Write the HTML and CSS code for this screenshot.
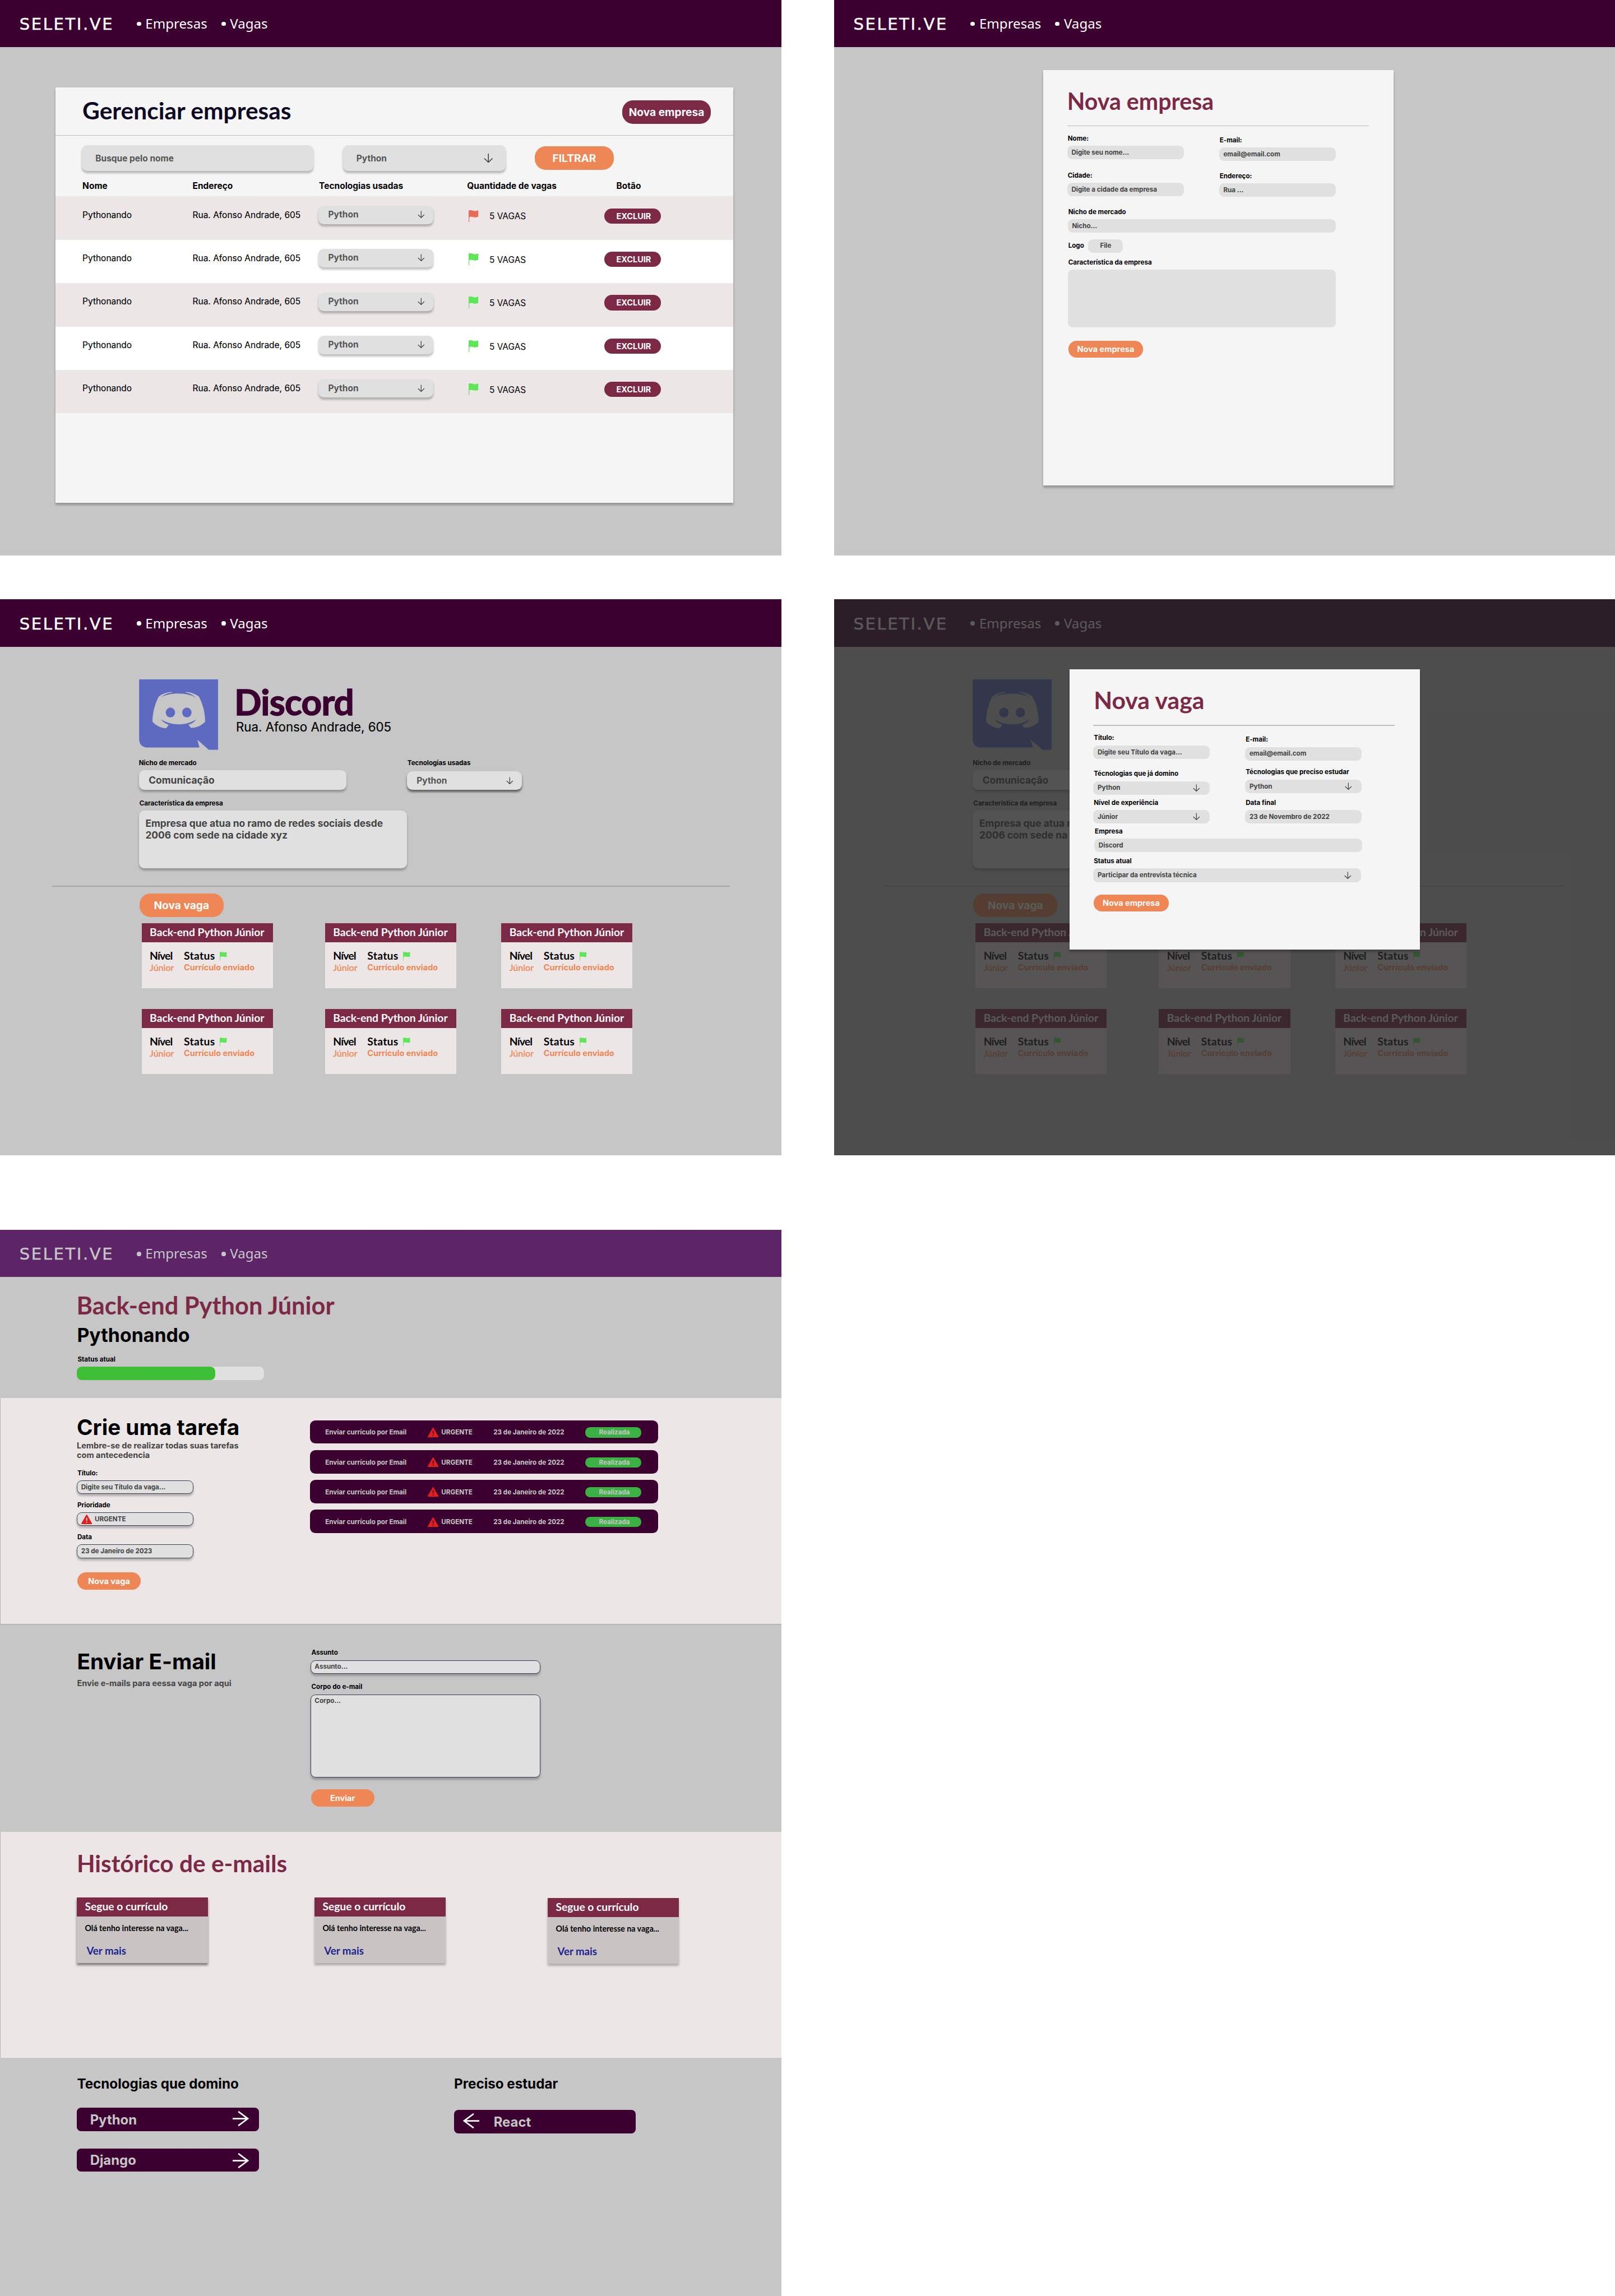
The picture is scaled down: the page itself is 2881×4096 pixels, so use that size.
FILE: index.html
```html
<!DOCTYPE html>
<html lang="pt-BR">
<head>
<meta charset="utf-8">
<title>SELETI.VE</title>
<link rel="stylesheet" href="styles.css">
</head>
<body>
<svg class="sprite" aria-hidden="true">
  <symbol id="i-down" viewBox="0 0 17 17"><path d="M8.5 0V16M1 8.8L8.5 16.2L16 8.8" fill="none" stroke="currentColor" stroke-width="1.7"/></symbol>
  <symbol id="i-right" viewBox="0 0 30 28"><path d="M0 14H28M10.500 1L28 14L10.500 27" fill="none" stroke="currentColor" stroke-width="2.800"/></symbol>
  <symbol id="i-left" viewBox="0 0 30 28"><path d="M30 14H2M19.500 1L2 14L19.500 27" fill="none" stroke="currentColor" stroke-width="2.800"/></symbol>
  <symbol id="i-flag" viewBox="0 0 18 22"><path d="M0 .6C3-.2 6 0 9 1C12 2 15 1.600 18 0V12C15 13.300 12 13.600 9 12.600C6 11.600 3 12 1.200 12.800V22H0Z" fill="currentColor"/></symbol>
  <symbol id="i-alert" viewBox="0 0 20 18"><path d="M10 1.300L18.700 16.700H1.300Z" fill="#e01f1f" stroke="#e01f1f" stroke-width="2.400" stroke-linejoin="round"/><path d="M10 6V11.500M10 13.200V15" stroke="currentColor" stroke-width="1.700"/></symbol>
  <symbol id="i-discord" viewBox="0 0 437 390"><path d="M0 0H437V390H386L322 334L334 377H50Q0 377 0 327Z" fill="#5d6abf"/><path d="M182 70C160 68 125 80 108 96C90 130 74 180 74 234C95 258 125 270 150 270L164 251C145 245 130 235 121 222C180 258 260 258 315 222C305 238 290 246 272 251L287 268C320 268 345 255 365 234C365 180 350 130 331 96C315 82 280 68 257 70V73C275 75 300 85 317 105C280 70 160 70 119 102C135 85 160 75 182 73Z" fill="#c6c6c6"/><ellipse cx="173" cy="183" rx="26" ry="27" fill="#5d6abf"/><ellipse cx="264" cy="183" rx="26" ry="27" fill="#5d6abf"/></symbol>
</svg>

<main class="board">

  <section class="screen">
    <header class="topbar"><span class="brand">SELETI.VE</span><nav class="nav"><a class="nav-link">Empresas</a><a class="nav-link">Vagas</a></nav></header>
    <div class="panel manage">
      <div class="manage-head"><h1 class="manage-title">Gerenciar empresas</h1><button class="btn btn-wine manage-new">Nova empresa</button></div>
      <div class="filters">
        <div class="box search">Busque pelo nome</div>
        <div class="box tech-filter">Python<svg class="arrow-lg"><use href="#i-down"/></svg></div>
        <button class="btn btn-filter">FILTRAR</button>
      </div>
      <div class="columns"><span>Nome</span><span>Endereço</span><span>Tecnologias usadas</span><span>Quantidade de vagas</span><span>Botão</span></div>
      <div class="row"><span class="cell">Pythonando</span><span class="cell">Rua. Afonso Andrade, 605</span><div class="box row-select">Python<svg class="arrow-sm"><use href="#i-down"/></svg></div><div class="jobs"><svg class="flag late"><use href="#i-flag"/></svg>5 VAGAS</div><button class="btn btn-delete">EXCLUIR</button></div>
      <div class="row"><span class="cell">Pythonando</span><span class="cell">Rua. Afonso Andrade, 605</span><div class="box row-select">Python<svg class="arrow-sm"><use href="#i-down"/></svg></div><div class="jobs"><svg class="flag"><use href="#i-flag"/></svg>5 VAGAS</div><button class="btn btn-delete">EXCLUIR</button></div>
      <div class="row"><span class="cell">Pythonando</span><span class="cell">Rua. Afonso Andrade, 605</span><div class="box row-select">Python<svg class="arrow-sm"><use href="#i-down"/></svg></div><div class="jobs"><svg class="flag"><use href="#i-flag"/></svg>5 VAGAS</div><button class="btn btn-delete">EXCLUIR</button></div>
      <div class="row"><span class="cell">Pythonando</span><span class="cell">Rua. Afonso Andrade, 605</span><div class="box row-select">Python<svg class="arrow-sm"><use href="#i-down"/></svg></div><div class="jobs"><svg class="flag"><use href="#i-flag"/></svg>5 VAGAS</div><button class="btn btn-delete">EXCLUIR</button></div>
      <div class="row"><span class="cell">Pythonando</span><span class="cell">Rua. Afonso Andrade, 605</span><div class="box row-select">Python<svg class="arrow-sm"><use href="#i-down"/></svg></div><div class="jobs"><svg class="flag"><use href="#i-flag"/></svg>5 VAGAS</div><button class="btn btn-delete">EXCLUIR</button></div>
    </div>
  </section>

  <section class="screen">
    <header class="topbar"><span class="brand">SELETI.VE</span><nav class="nav"><a class="nav-link">Empresas</a><a class="nav-link">Vagas</a></nav></header>
    <div class="panel form company-form">
      <h1 class="form-title title-company">Nova empresa</h1>
      <hr class="form-rule">
      <div class="form-cols">
        <div class="form-col gap-22">
          <div class="field"><label>Nome:</label><div class="input">Digite seu nome...</div></div>
          <div class="field"><label>Cidade:</label><div class="input">Digite a cidade da empresa</div></div>
        </div>
        <div class="form-col right gap-20">
          <div class="field"><label>E-mail:</label><div class="input">email@email.com</div></div>
          <div class="field"><label>Endereço:</label><div class="input">Rua ...</div></div>
        </div>
      </div>
      <div class="field wide niche"><label>Nicho de mercado</label><div class="input">Nicho...</div></div>
      <div class="logo-row"><label>Logo</label><div class="input file">File</div></div>
      <div class="field wide traits"><label>Característica da empresa</label><div class="input area"></div></div>
      <button class="btn btn-form company-submit">Nova empresa</button>
    </div>
  </section>

  <section class="screen company">
    <header class="topbar"><span class="brand">SELETI.VE</span><nav class="nav"><a class="nav-link">Empresas</a><a class="nav-link">Vagas</a></nav></header>
    <div class="company-head"><svg class="company-logo"><use href="#i-discord"/></svg><div class="company-id"><h1 class="company-name">Discord</h1><p class="company-address">Rua. Afonso Andrade, 605</p></div></div>
    <div class="company-fields">
      <div class="field niche-col"><label>Nicho de mercado</label><div class="box niche-box">Comunicação</div></div>
      <div class="field"><label>Tecnologias usadas</label><div class="box tech-box">Python<svg class="arrow-sm"><use href="#i-down"/></svg></div></div>
    </div>
    <div class="field about"><label>Característica da empresa</label><div class="box about-box">Empresa que atua no ramo de redes sociais desde<br>2006 com sede na cidade xyz</div></div>
    <hr class="company-rule">
    <button class="btn btn-job">Nova vaga</button>
    <div class="cards">
      <article class="card"><h2 class="card-title">Back-end Python Júnior</h2><div class="card-body"><div class="card-level"><b>Nível</b><i>Júnior</i></div><div class="card-status"><b>Status<svg class="flag-sm"><use href="#i-flag"/></svg></b><em>Currículo enviado</em></div></div></article>
      <article class="card"><h2 class="card-title">Back-end Python Júnior</h2><div class="card-body"><div class="card-level"><b>Nível</b><i>Júnior</i></div><div class="card-status"><b>Status<svg class="flag-sm"><use href="#i-flag"/></svg></b><em>Currículo enviado</em></div></div></article>
      <article class="card"><h2 class="card-title">Back-end Python Júnior</h2><div class="card-body"><div class="card-level"><b>Nível</b><i>Júnior</i></div><div class="card-status"><b>Status<svg class="flag-sm"><use href="#i-flag"/></svg></b><em>Currículo enviado</em></div></div></article>
      <article class="card"><h2 class="card-title">Back-end Python Júnior</h2><div class="card-body"><div class="card-level"><b>Nível</b><i>Júnior</i></div><div class="card-status"><b>Status<svg class="flag-sm"><use href="#i-flag"/></svg></b><em>Currículo enviado</em></div></div></article>
      <article class="card"><h2 class="card-title">Back-end Python Júnior</h2><div class="card-body"><div class="card-level"><b>Nível</b><i>Júnior</i></div><div class="card-status"><b>Status<svg class="flag-sm"><use href="#i-flag"/></svg></b><em>Currículo enviado</em></div></div></article>
      <article class="card"><h2 class="card-title">Back-end Python Júnior</h2><div class="card-body"><div class="card-level"><b>Nível</b><i>Júnior</i></div><div class="card-status"><b>Status<svg class="flag-sm"><use href="#i-flag"/></svg></b><em>Currículo enviado</em></div></div></article>
    </div>
  </section>

  <section class="screen company">
    <header class="topbar"><span class="brand">SELETI.VE</span><nav class="nav"><a class="nav-link">Empresas</a><a class="nav-link">Vagas</a></nav></header>
    <div class="company-head"><svg class="company-logo"><use href="#i-discord"/></svg></div>
    <div class="company-fields">
      <div class="field niche-col"><label>Nicho de mercado</label><div class="box niche-box">Comunicação</div></div>
    </div>
    <div class="field about"><label>Característica da empresa</label><div class="box about-box"><p class="about-clip">Empresa que atua no<br>2006 com sede na</p></div></div>
    <hr class="company-rule">
    <button class="btn btn-job">Nova vaga</button>
    <div class="cards">
      <article class="card"><h2 class="card-title">Back-end Python Júnior</h2><div class="card-body"><div class="card-level"><b>Nível</b><i>Júnior</i></div><div class="card-status"><b>Status<svg class="flag-sm"><use href="#i-flag"/></svg></b><em>Currículo enviado</em></div></div></article>
      <article class="card"><h2 class="card-title"></h2><div class="card-body"><div class="card-level"><b>Nível</b><i>Júnior</i></div><div class="card-status"><b>Status<svg class="flag-sm"><use href="#i-flag"/></svg></b><em>Currículo enviado</em></div></div></article>
      <article class="card"><h2 class="card-title">Back-end Python Júnior</h2><div class="card-body"><div class="card-level"><b>Nível</b><i>Júnior</i></div><div class="card-status"><b>Status<svg class="flag-sm"><use href="#i-flag"/></svg></b><em>Currículo enviado</em></div></div></article>
      <article class="card"><h2 class="card-title">Back-end Python Júnior</h2><div class="card-body"><div class="card-level"><b>Nível</b><i>Júnior</i></div><div class="card-status"><b>Status<svg class="flag-sm"><use href="#i-flag"/></svg></b><em>Currículo enviado</em></div></div></article>
      <article class="card"><h2 class="card-title">Back-end Python Júnior</h2><div class="card-body"><div class="card-level"><b>Nível</b><i>Júnior</i></div><div class="card-status"><b>Status<svg class="flag-sm"><use href="#i-flag"/></svg></b><em>Currículo enviado</em></div></div></article>
      <article class="card"><h2 class="card-title">Back-end Python Júnior</h2><div class="card-body"><div class="card-level"><b>Nível</b><i>Júnior</i></div><div class="card-status"><b>Status<svg class="flag-sm"><use href="#i-flag"/></svg></b><em>Currículo enviado</em></div></div></article>
    </div>
    <div class="overlay">
      <div class="panel form modal">
        <h1 class="form-title title-job">Nova vaga</h1>
        <hr class="form-rule">
        <div class="form-cols">
          <div class="form-col job-left">
            <div class="field"><label>Título:</label><div class="input">Digite seu Título da vaga...</div></div>
            <div class="field after-20"><label>Técnologias que já domino</label><div class="input">Python<svg class="arrow-in"><use href="#i-down"/></svg></div></div>
            <div class="field after-7"><label>Nível de experiência</label><div class="input">Júnior<svg class="arrow-in"><use href="#i-down"/></svg></div></div>
          </div>
          <div class="form-col right">
            <div class="field"><label>E-mail:</label><div class="input">email@email.com</div></div>
            <div class="field after-14"><label>Técnologias que preciso estudar</label><div class="input">Python<svg class="arrow-in"><use href="#i-down"/></svg></div></div>
            <div class="field after-10"><label>Data final</label><div class="input">23 de Novembro de 2022</div></div>
          </div>
        </div>
        <div class="field wide job-company"><label>Empresa</label><div class="input">Discord</div></div>
        <div class="field wide job-status"><label>Status atual</label><div class="input">Participar da entrevista técnica<svg class="arrow-in"><use href="#i-down"/></svg></div></div>
        <button class="btn btn-form job-submit">Nova empresa</button>
      </div>
    </div>
  </section>

  <section class="screen job">
    <header class="topbar violet"><span class="brand">SELETI.VE</span><nav class="nav"><a class="nav-link">Empresas</a><a class="nav-link">Vagas</a></nav></header>
    <div class="job-intro">
      <h1 class="job-title">Back-end Python Júnior</h1>
      <p class="job-company-name">Pythonando</p>
      <div class="field"><label>Status atual</label><div class="progress"><div class="progress-fill"></div></div></div>
    </div>
    <div class="band tasks">
      <div class="side">
        <h2 class="side-title">Crie uma tarefa</h2>
        <p class="side-text">Lembre-se de realizar todas suas tarefas<br>com antecedencia</p>
        <div class="task-form">
          <div class="field"><label>Título:</label><div class="input outlined">Digite seu Título da vaga...</div></div>
          <div class="field"><label>Prioridade</label><div class="input outlined"><svg class="alert in-form"><use href="#i-alert"/></svg>URGENTE</div></div>
          <div class="field"><label>Data</label><div class="input outlined">23 de Janeiro de 2023</div></div>
        </div>
        <button class="btn btn-form btn-task">Nova vaga</button>
      </div>
      <div class="task-list">
        <div class="task"><span>Enviar currículo por Email</span><span class="task-prio"><svg class="alert"><use href="#i-alert"/></svg>URGENTE</span><span>23 de Janeiro de 2022</span><span class="pill">Realizada</span></div>
        <div class="task"><span>Enviar currículo por Email</span><span class="task-prio"><svg class="alert"><use href="#i-alert"/></svg>URGENTE</span><span>23 de Janeiro de 2022</span><span class="pill">Realizada</span></div>
        <div class="task"><span>Enviar currículo por Email</span><span class="task-prio"><svg class="alert"><use href="#i-alert"/></svg>URGENTE</span><span>23 de Janeiro de 2022</span><span class="pill">Realizada</span></div>
        <div class="task"><span>Enviar currículo por Email</span><span class="task-prio"><svg class="alert"><use href="#i-alert"/></svg>URGENTE</span><span>23 de Janeiro de 2022</span><span class="pill">Realizada</span></div>
      </div>
    </div>
    <div class="mail">
      <div class="side">
        <h2 class="side-title">Enviar E-mail</h2>
        <p class="side-text mail-text">Envie e-mails para eessa vaga por aqui</p>
      </div>
      <div class="mail-form">
        <div class="field"><label>Assunto</label><div class="input outlined">Assunto...</div></div>
        <div class="field mail-body"><label>Corpo do e-mail</label><div class="input outlined">Corpo...</div></div>
        <button class="btn btn-form btn-send">Enviar</button>
      </div>
    </div>
    <div class="band history">
      <h2 class="history-title">Histórico de e-mails</h2>
      <div class="mails">
        <article class="mail-card strong"><h3 class="card-title">Segue o currículo</h3><p class="mail-snippet">Olá tenho interesse na vaga...</p><a class="mail-more">Ver mais</a></article>
        <article class="mail-card"><h3 class="card-title">Segue o currículo</h3><p class="mail-snippet">Olá tenho interesse na vaga...</p><a class="mail-more">Ver mais</a></article>
        <article class="mail-card lower"><h3 class="card-title">Segue o currículo</h3><p class="mail-snippet">Olá tenho interesse na vaga...</p><a class="mail-more">Ver mais</a></article>
      </div>
    </div>
    <div class="skills">
      <div class="skill-col known"><h3 class="skill-title">Tecnologias que domino</h3><div class="skill">Python<svg class="arrow-xl"><use href="#i-right"/></svg></div><div class="skill second">Django<svg class="arrow-xl"><use href="#i-right"/></svg></div></div>
      <div class="skill-col study"><h3 class="skill-title">Preciso estudar</h3><div class="skill"><svg class="arrow-xl"><use href="#i-left"/></svg>React</div></div>
    </div>
  </section>

</main>
</body>
</html>
```
FILE: styles.css
```css
* { box-sizing: border-box; margin: 0; padding: 0; }

html, body { background: #fff; overflow: hidden; }

body { font-family: Inter, "Liberation Sans", sans-serif; color: #000; }

.sprite { display: none; }

svg { display: block; flex: none; }

/* Board: two columns of 1440px screens */
.board {
  zoom: 0.96785;
  width: 2977px;
  height: 4232px;
  display: grid;
  grid-template-columns: 1440px 1440px;
  grid-template-rows: 1024px 1024px 1965px;
  column-gap: 97px;
}
.screen { position: relative; background: #c6c6c6; height: 1024px; overflow: hidden; }
.screen:nth-child(3), .screen:nth-child(4) { margin-top: 81px; }
.screen.job { height: 1965px; margin-top: 219px; }

/* Top bar */
.topbar { height: 87px; background: #3b0030; color: #fff; display: flex; align-items: flex-start; padding-left: 36px; }
.violet { background: #5d2468; color: #c6c6c6; }
.brand { width: 216px; padding-top: 25px; font: 400 30px/40px "DejaVu Sans", sans-serif; letter-spacing: 2.7px; -webkit-text-stroke: .5px currentColor; }
.nav { display: flex; padding-top: 26px; }
.nav-link { display: flex; align-items: center; font: 400 24.9px/36px "Noto Sans", sans-serif; width: 156px; }
.nav-link::before { content: ""; width: 8px; height: 8px; border-radius: 50%; background: currentColor; margin: 0 8px 0 0; }

/* Shared pieces */
.panel { background: #f5f5f5; box-shadow: 0 4px 4px rgba(0, 0, 0, .25); }
.btn { border: 0; display: flex; align-items: center; justify-content: center; font-family: inherit; font-weight: 700; color: #fff; background: #ee8655; }
.btn-wine, .btn-delete { background: #7c2946; }
.box { background: #e0e0e0; border-radius: 10px; box-shadow: 0 4px 4px rgba(0, 0, 0, .25); display: flex; align-items: center; justify-content: space-between; font-weight: 700; font-size: 16px; color: #555; }
.field label, .logo-row label { display: block; font: 700 12px/15px Inter, sans-serif; padding-left: 1px; }
.input { width: 215px; height: 25px; margin-top: 6px; border-radius: 9px; background: #e0e0e0; display: flex; align-items: center; font: 700 12px/15px Inter, sans-serif; color: #444; padding: 0 18px 0 8px; }
.arrow-lg { width: 17px; height: 17px; color: #444; }
.arrow-sm, .arrow-in { width: 13px; height: 14px; color: #444; }
.arrow-in { margin-left: auto; }

/* Manage companies */
.manage { width: 1249px; height: 766px; margin: 74px 0 0 102px; }
.manage-head { height: 89px; border-bottom: 2px solid #bcbcbc; display: flex; justify-content: space-between; padding: 0 41px 0 50px; }
.manage-title { margin-top: 16px; font: 700 43.9px/54px Lato, sans-serif; color: #0e0a26; }
.manage-new { margin-top: 24px; width: 163px; height: 43px; border-radius: 20px; font-size: 19.8px; }
.filters { display: flex; padding: 18px 0 0 49px; height: 65px; }
.search { width: 427px; height: 47px; padding-left: 25px; }
.tech-filter { width: 300px; height: 47px; margin-left: 54px; padding: 0 23px 0 25px; }
.btn-filter { width: 145px; height: 43px; margin: 2px 0 0 54px; border-radius: 20px; font-size: 19.8px; }
.columns { display: grid; grid-template-columns: 203px 233px 273px 275px 1fr; padding: 18px 0 9px 50px; font: 700 16px/20px Inter, sans-serif; }
.row { height: 80px; display: grid; align-items: start; grid-template-columns: 203px 232px 277px 250px 1fr; padding-left: 50px; background: #fff; font: 400 16px/20px Inter, sans-serif; }
.row:nth-child(even) { background: #ece6e6; }
.cell { margin-top: 24px; -webkit-text-stroke: .15px; }
.row-select { width: 212px; height: 34px; margin-top: 17px; padding: 0 16px 1px 18px; }
.jobs { display: flex; gap: 20px; margin-top: 27px; }
.flag { width: 18px; height: 22px; margin-top: -2px; color: #5ee558; }
.flag.late { color: #e86a58; }
.btn-delete { width: 104px; height: 28px; margin-top: 22px; padding-left: 4px; border-radius: 14px; font-size: 15px; }

/* Forms */
.form { width: 646px; padding: 32px 0 0 44px; }
.form-title { font: 700 42.5px/50px Lato, sans-serif; color: #7c2946; }
.title-job { font-size: 44.2px; }
.form-rule { border: 0; height: 2px; width: 556px; margin-top: 20px; background: #bcbcbc; }
.form-cols { display: flex; margin-top: 15px; }
.form-col { width: 280px; display: flex; flex-direction: column; }
.form-col.right { width: 215px; margin-top: 3px; }
.gap-22 { gap: 22px; }
.gap-20 { gap: 20px; }
.after-20 { margin-top: 20px; }
.after-14 { margin-top: 14px; }
.after-10 { margin-top: 10px; }
.after-7 { margin-top: 7px; }
.wide .input { width: 494px; }
.btn-form { font-size: 15px; height: 31px; width: 138px; border-radius: 15px; }

.company-form { height: 766px; margin: 42px 0 0 386px; }
.niche, .traits, .logo-row { padding-left: 1px; }
.niche { margin-top: 20px; }
.logo-row { display: flex; align-items: center; margin-top: 12px; }
.logo-row label { width: 38px; }
.logo-row .file { width: 64px; margin: 0; padding: 0; justify-content: center; }
.traits { margin-top: 10px; }
.input.area { height: 107px; }
.company-submit { margin: 24px 0 0 2px; }

.overlay { position: absolute; inset: 0; background: rgba(39, 39, 39, .763); }
.modal { height: 516px; margin: 129px 0 0 434px; }
.modal .form-title { margin-left: 1px; }
.job-company { margin: 7px 0 0 2px; }
.job-status { margin-top: 9px; }
.job-submit { margin: 23px 0 0 1px; }

/* Company page */
.company-head { display: flex; gap: 33px; padding: 60px 0 0 256px; height: 190px; }
.company-logo { width: 146px; height: 130px; }
.company-name { margin-top: 6px; font: 700 66px/70px Lato, sans-serif; letter-spacing: -.8px; color: #3b0030; margin-left: -3px; -webkit-text-stroke: 1.500px #3b0030; }
.company-address { margin-top: -2px; font: 400 23px/28px Inter, sans-serif; -webkit-text-stroke: .2px; }
.company-fields { display: flex; padding: 17px 0 0 255px; }
.niche-col { width: 495px; }
.niche-box { width: 383px; height: 36px; margin: 6px 0 0 1px; padding-left: 18px; font-size: 18px; color: #444; }
.tech-box { width: 212px; height: 34px; margin-top: 8px; padding: 0 16px 0 18px; box-shadow: 0 4px 4px rgba(0, 0, 0, .5); }
.about { padding: 17px 0 0 256px; }
.about-box { display: block; width: 494px; height: 107px; margin-top: 6px; padding: 12px; font-size: 18px; line-height: 22px; color: #444; }
.about-clip { width: 166px; overflow: hidden; white-space: nowrap; }
.company-rule { border: 0; width: 1249px; height: 2px; margin: 32px 0 0 96px; background: #a6a6a6; }
.btn-job { width: 155px; height: 43px; margin: 12px 0 0 257px; border-radius: 20px; font-size: 19.8px; }
.cards { display: grid; grid-template-columns: 338px 325px 242px; row-gap: 38px; padding: 12px 0 0 261px; }
.card { width: 242px; height: 120px; background: #ece6e6; }
.card-title { height: 35px; background: #7c2946; color: #fff; font: 700 19.9px/34px Lato, sans-serif; padding-left: 15px; }
.card-body { display: flex; padding: 12px 0 0 15px; }
.card-level { width: 63px; }
.card-body b { display: flex; font: 700 20px/24px Lato, sans-serif; letter-spacing: .3px; }
.card-level b { letter-spacing: -.9px; }
.card-body i { display: block; font: 400 16.6px/20px Lato, sans-serif; color: #ee8655; -webkit-text-stroke: .3px; }
.card-body em { display: block; font: 700 15px/20px Inter, sans-serif; color: #ee8655; }
.flag-sm { width: 13px; height: 16px; margin: 6px 0 0 9px; color: #5ee558; }

/* Job page */
.job-intro { height: 223px; padding: 24px 0 0 142px; }
.job-title { font: 700 44.8px/54px Lato, sans-serif; color: #7c2946; margin-left: -1px; }
.job-company-name { margin: 9px 0 15px; font: 700 35px/42px Inter, sans-serif; }
.progress { width: 345px; height: 25px; margin-top: 6px; border-radius: 9px; background: #e0e0e0; }
.progress-fill { width: 255px; height: 25px; border-radius: 9px; background: #3dbf37; }
.band { background: #ece6e6; border-left: 1.500px solid #b9b5b5; }
.tasks { height: 417px; display: flex; padding-left: 140.500px; border-bottom: 2px solid #aaa6a6; }
.side { width: 430px; padding-top: 30px; }
.side-title { font: 700 40px/48px Inter, sans-serif; }
.side-text { font: 700 15px/18px Inter, sans-serif; color: #444; }
.task-form { display: grid; gap: 13px; margin-top: 17px; }
.outlined { border: 1.200px solid #3d3b52; box-shadow: 0 4px 4px rgba(0, 0, 0, .25); padding-left: 7px; }
.btn-task, .btn-send { width: 117px; height: 32px; margin: 26px 0 0 1px; border-radius: 16px; }
.alert { width: 20px; height: 18px; margin-right: 5px; color: #3b0030; }
.alert.in-form { color: #eee; }
.task-list { display: grid; gap: 12px; align-content: start; padding-top: 41px; }
.task { width: 641px; height: 43px; border-radius: 10px; background: #3b0030; color: #c6c6c6; display: grid; align-items: center; grid-template-columns: 189px 121px 169px 103px; padding: 2px 0 0 28px; font: 700 12px/15px Inter, sans-serif; }
.task-prio { display: flex; align-items: center; }
.pill { height: 19px; border-radius: 9px; background: #3bb143; text-align: center; line-height: 20px; padding-left: 5px; }
.mail { height: 383px; display: flex; padding-left: 142px; }
.mail .side { padding-top: 45px; }
.mail-text { margin-top: 6px; }
.mail-form { padding: 45px 0 0 1px; }
.mail-form .input { width: 424px; margin-left: -1px; }
.mail-body { margin-top: 17px; }
.mail-body .input { height: 153px; align-items: flex-start; padding-top: 4px; }
.btn-send { margin: 22px 0 0; }
.history { height: 416px; padding: 31px 0 0 140.500px; }
.history-title { font: 700 43.8px/54px Lato, sans-serif; color: #7c2946; }
.mails { display: grid; grid-template-columns: 438px 430px 242px; margin-top: 36px; }
.mail-card { width: 242px; height: 120px; background: #c9c3c3; box-shadow: 0 4px 4px rgba(0, 0, 0, .25); }
.mail-card.strong { box-shadow: 0 4px 4px rgba(0, 0, 0, .45); }
.mail-card.lower { margin-top: 1px; }
.mail-snippet { padding: 12px 0 0 15px; font: 700 14.7px/18px Lato, sans-serif; }
.mail-more { display: block; padding: 21px 0 0 18px; font: 700 19.3px/24px Lato, sans-serif; color: #1c2490; }
.skills { display: flex; padding: 33px 0 0 142px; }
.known { width: 695px; }
.skill-title { font: 700 25px/30px Inter, sans-serif; }
.skill { width: 335px; height: 43px; margin-top: 29px; border-radius: 8px; background: #3b0030; color: #c6c6c6; display: flex; align-items: center; justify-content: space-between; padding: 1px 18px 0 24px; font: 700 24.7px/30px Inter, sans-serif; }
.arrow-xl { width: 30px; height: 28px; color: #fff; margin-top: -3px; }
.skill.second { margin-top: 32px; }
.second .arrow-xl { margin-top: 2px; }
.study .skill { margin-top: 33px; justify-content: flex-start; gap: 27px; padding-left: 16px; }
```
